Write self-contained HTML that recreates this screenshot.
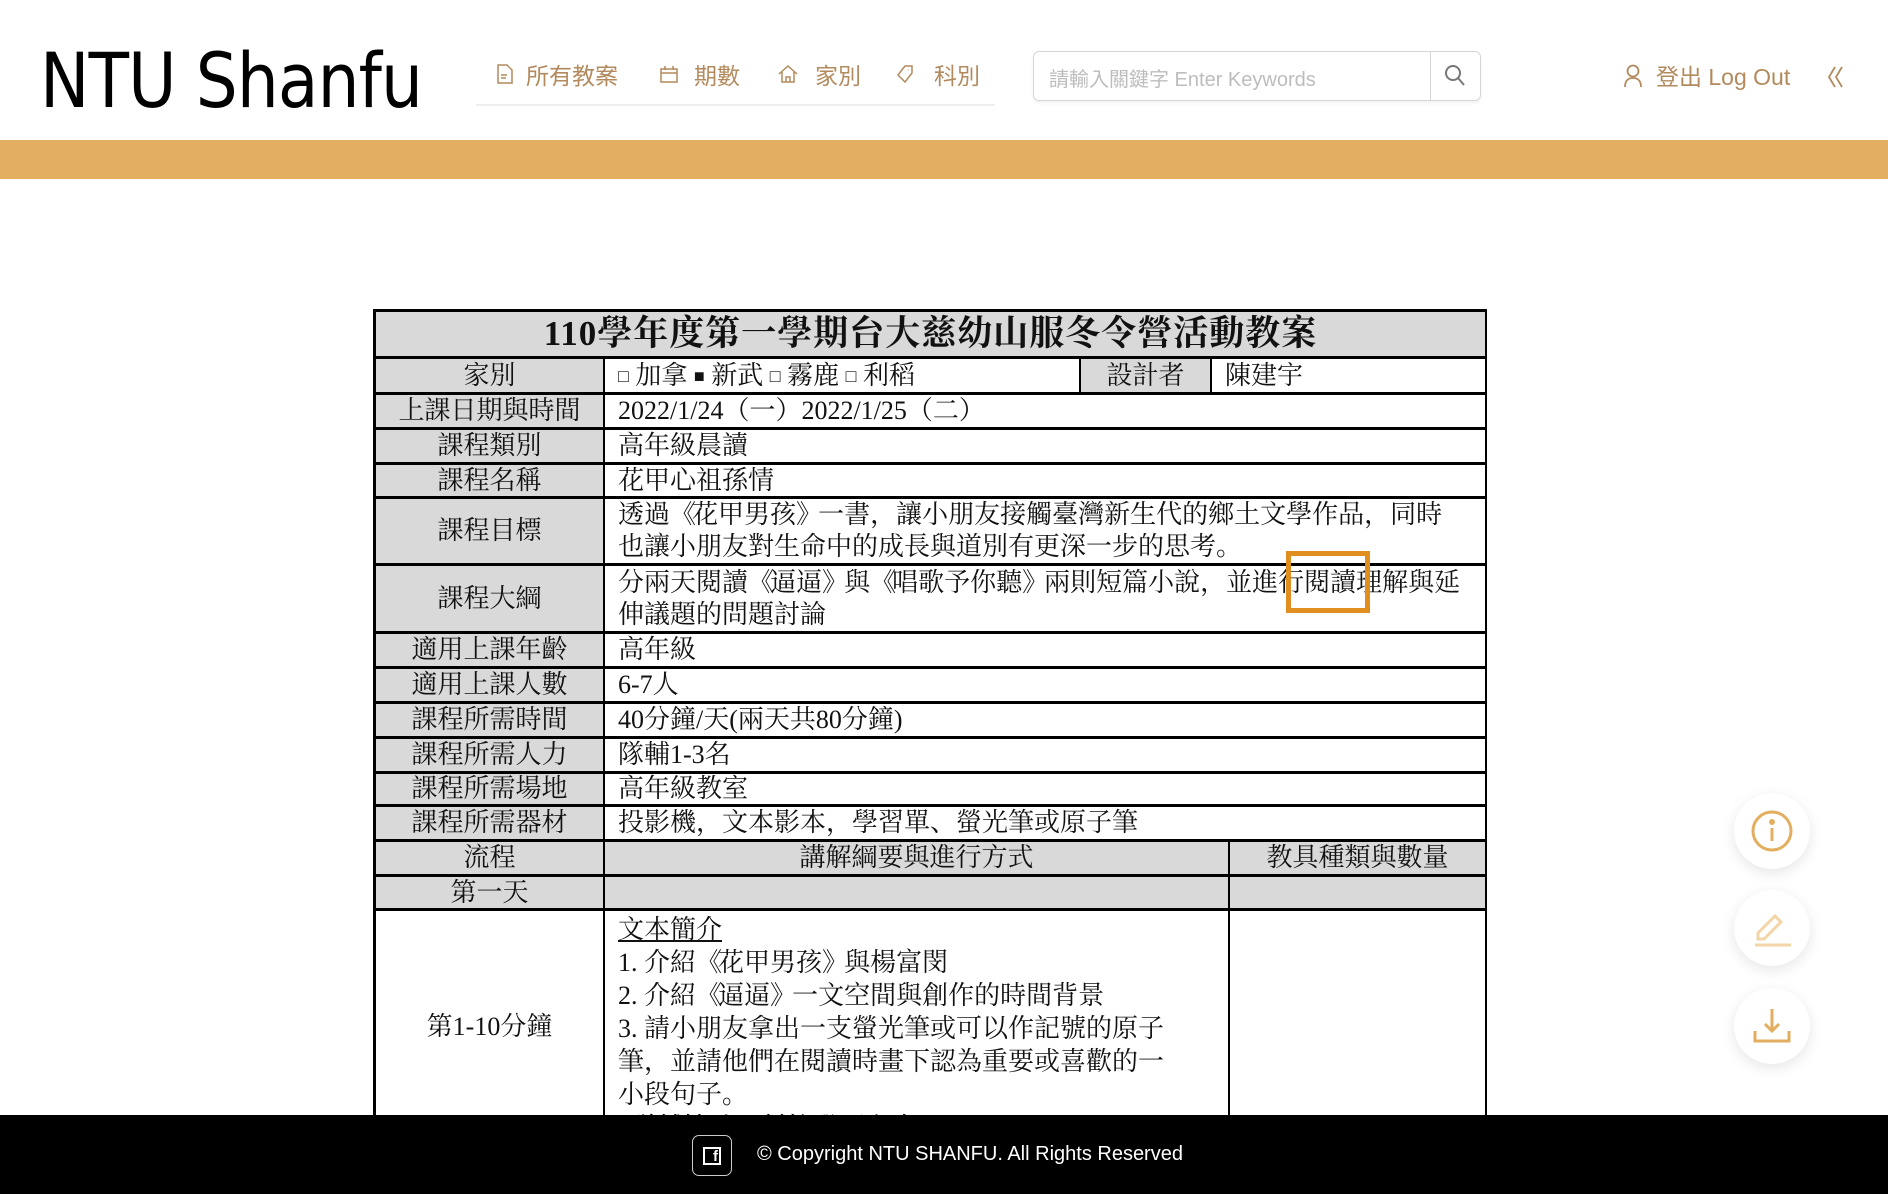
<!DOCTYPE html>
<html><head><meta charset="utf-8"><style>
*{margin:0;padding:0;box-sizing:border-box}
html,body{width:1888px;height:1194px;overflow:hidden}
body{position:relative;background:#fff;font-family:"Liberation Sans","Noto Sans CJK TC",sans-serif}
.logo{position:absolute;left:40px;top:36px;font-size:76px;color:#000;letter-spacing:-1px;font-family:"DejaVu Sans","Liberation Sans",sans-serif;font-weight:400;transform:scaleX(0.87);transform-origin:left}
.nav{position:absolute;top:57px;font-size:23px;color:#b38a5d;display:flex;align-items:center;gap:8px}
.navline{position:absolute;left:476px;top:104px;width:519px;height:2px;background:#eee}
.search{position:absolute;left:1033px;top:51px;width:448px;height:50px;border:1px solid #d6d6d6;border-radius:6px;box-shadow:0 2px 3px rgba(0,0,0,.06)}
.search span{position:absolute;left:15px;top:11px;font-size:20px;color:#bdbdbd}
.search .btn{position:absolute;left:396px;top:0;width:1px;height:48px;background:#d6d6d6}
.band{position:absolute;left:0;top:140px;width:1888px;height:39px;background:#e3ae5f}
.tblwrap{position:absolute;left:373px;top:309px;width:1120px;height:806px;overflow:hidden}
.tbl{position:absolute;left:0;top:0;width:1114px;height:806px;border-left:3px solid #000;border-top:3px solid #000;font-family:"Liberation Serif","Noto Serif CJK SC",serif;font-size:26px;color:#111}
.c{position:absolute;border-right:2px solid #000;border-bottom:3px solid #000;display:flex;align-items:center;padding-left:13px;line-height:32px;overflow:hidden;white-space:nowrap}
.g{background:#d9d9d9;justify-content:center;padding-left:0}
.n{letter-spacing:-4px}
.footer{position:absolute;left:0;top:1115px;width:1888px;height:79px;background:#000;color:#fff}
.fab{position:absolute;left:1734px;width:76px;height:76px;border-radius:50%;background:#fff;box-shadow:0 4px 14px rgba(0,0,0,.1);display:flex;align-items:center;justify-content:center}
</style></head><body>
<div class="logo">NTU Shanfu</div>
<div class="nav" style="left:497px"><svg width="16" height="20" viewBox="0 0 16 20" fill="none" stroke="#b38a5d" stroke-width="1.5"><path d="M1 1h9l5 5v13H1z M4 11h6 M4 14h5"/></svg><span style="margin-left:5px">所有教案</span></div>
<div class="nav" style="left:660px"><svg width="18" height="18" viewBox="0 0 18 18" fill="none" stroke="#b38a5d" stroke-width="1.5"><path d="M1 4h16v13H1z M1 8h16 M5 1v4 M13 1v4"/></svg><span style="margin-left:8px">期數</span></div>
<div class="nav" style="left:778px"><svg width="20" height="18" viewBox="0 0 20 18" fill="none" stroke="#b38a5d" stroke-width="1.5"><path d="M1 9l9-8 9 8 M4 7v10h12V7 M8 17v-5h4v5"/></svg><span style="margin-left:9px">家別</span></div>
<div class="nav" style="left:896px"><svg width="18" height="20" viewBox="0 0 18 20" fill="none" stroke="#b38a5d" stroke-width="1.5"><path d="M9 2h7v7l-7 9-7-7z M12 6h.5"/></svg><span style="margin-left:12px">科別</span></div>
<div class="navline"></div>
<div class="search"><span>請輸入關鍵字 Enter Keywords</span><div class="btn"></div>
<svg style="position:absolute;left:410px;top:12px" width="22" height="24" viewBox="0 0 22 24" fill="none" stroke="#777" stroke-width="2"><circle cx="9" cy="9" r="7"/><path d="M14 14l6 7"/></svg></div>
<svg style="position:absolute;left:1623px;top:64px" width="20" height="24" viewBox="0 0 20 24" fill="none" stroke="#b38a5d" stroke-width="1.8"><circle cx="10" cy="7" r="5.5"/><path d="M2 23c0-6 3-9 8-9s8 3 8 9"/></svg>
<div style="position:absolute;left:1656px;top:58px;font-size:23px;color:#b38a5d">登出 Log Out</div>
<svg style="position:absolute;left:1827px;top:66px" width="18" height="22" viewBox="0 0 18 22" fill="none" stroke="#b38a5d" stroke-width="1.8"><path d="M8 1L2 11l6 10 M15 1L9 11l6 10"/></svg>
<div class="band"></div>

<div class="tblwrap"><div class="tbl">
<div class="c g" style="left:0;top:0;width:1111px;height:47px;font-size:35px;font-weight:bold;letter-spacing:1px">110學年度第一學期台大慈幼山服冬令營活動教案</div>
<div class="c g" style="left:0;top:47px;width:229px;height:36px">家別</div>
<div class="c" style="left:229px;top:47px;width:476px;height:36px"><span style="font-size:18px">□</span>&nbsp;加拿&nbsp;<span style="font-size:18px">■</span>&nbsp;新武&nbsp;<span style="font-size:18px">□</span>&nbsp;霧鹿&nbsp;<span style="font-size:18px">□</span>&nbsp;利稻</div>
<div class="c g" style="left:705px;top:47px;width:131px;height:36px">設計者</div>
<div class="c" style="left:836px;top:47px;width:275px;height:36px">陳建宇</div>
<div class="c g" style="left:0;top:83px;width:229px;height:35px">上課日期與時間</div>
<div class="c" style="left:229px;top:83px;width:882px;height:35px">2022/1/24（一）2022/1/25（二）</div>
<div class="c g" style="left:0;top:118px;width:229px;height:35px">課程類別</div>
<div class="c" style="left:229px;top:118px;width:882px;height:35px">高年級晨讀</div>
<div class="c g" style="left:0;top:153px;width:229px;height:34px">課程名稱</div>
<div class="c" style="left:229px;top:153px;width:882px;height:34px">花甲心祖孫情</div>
<div class="c g" style="left:0;top:187px;width:229px;height:67px">課程目標</div>
<div class="c" style="left:229px;top:187px;width:882px;height:67px"><div>透過<span class="n">《</span>花甲男孩<span class="n">》</span>一書，讓小朋友接觸臺灣新生代的鄉土文學作品，同時<br>也讓小朋友對生命中的成長與道別有更深一步的思考。</div></div>
<div class="c g" style="left:0;top:254px;width:229px;height:68px">課程大綱</div>
<div class="c" style="left:229px;top:254px;width:882px;height:68px"><div>分兩天閱讀<span class="n">《</span>逼逼<span class="n">》</span>與<span class="n">《</span>唱歌予你聽<span class="n">》</span>兩則短篇小說，並進行閱讀理解與延<br>伸議題的問題討論</div></div>
<div class="c g" style="left:0;top:322px;width:229px;height:35px">適用上課年齡</div>
<div class="c" style="left:229px;top:322px;width:882px;height:35px">高年級</div>
<div class="c g" style="left:0;top:357px;width:229px;height:35px">適用上課人數</div>
<div class="c" style="left:229px;top:357px;width:882px;height:35px">6-7人</div>
<div class="c g" style="left:0;top:392px;width:229px;height:35px">課程所需時間</div>
<div class="c" style="left:229px;top:392px;width:882px;height:35px">40分鐘/天(兩天共80分鐘)</div>
<div class="c g" style="left:0;top:427px;width:229px;height:35px">課程所需人力</div>
<div class="c" style="left:229px;top:427px;width:882px;height:35px">隊輔1-3名</div>
<div class="c g" style="left:0;top:462px;width:229px;height:33px">課程所需場地</div>
<div class="c" style="left:229px;top:462px;width:882px;height:33px">高年級教室</div>
<div class="c g" style="left:0;top:495px;width:229px;height:35px">課程所需器材</div>
<div class="c" style="left:229px;top:495px;width:882px;height:35px">投影機，文本影本，學習單、螢光筆或原子筆</div>
<div class="c g" style="left:0;top:530px;width:229px;height:35px">流程</div>
<div class="c g" style="left:229px;top:530px;width:625px;height:35px">講解綱要與進行方式</div>
<div class="c g" style="left:854px;top:530px;width:257px;height:35px">教具種類與數量</div>
<div class="c g" style="left:0;top:565px;width:229px;height:34px">第一天</div>
<div class="c g" style="left:229px;top:565px;width:625px;height:34px"></div>
<div class="c g" style="left:854px;top:565px;width:257px;height:34px"></div>
<div class="c" style="left:0;top:599px;width:229px;height:207px;justify-content:center;padding-left:0;align-items:flex-start;padding-top:100px;border-bottom:0">第1-10分鐘</div>
<div class="c" style="left:229px;top:599px;width:625px;height:207px;align-items:flex-start;padding-top:2px;line-height:33px;border-bottom:0"><div><u>文本簡介</u><br>1. 介紹<span class="n">《</span>花甲男孩<span class="n">》</span>與楊富閔<br>2. 介紹<span class="n">《</span>逼逼<span class="n">》</span>一文空間與創作的時間背景<br>3. 請小朋友拿出一支螢光筆或可以作記號的原子<br>筆，並請他們在閱讀時畫下認為重要或喜歡的一<br>小段句子。<br>*隊輔協助，幫忙發下文本</div></div>
<div class="c" style="left:854px;top:599px;width:257px;height:207px;border-bottom:0"></div>
</div></div>
<div style="position:absolute;left:1286px;top:551px;width:84px;height:62px;border:5px solid #e08e1f"></div>

<div class="fab" style="top:793px"><svg width="42" height="42" viewBox="0 0 42 42" fill="none" stroke="#e3ae5f" stroke-width="3"><circle cx="21" cy="21" r="19"/><path d="M21 18v13"/><circle cx="21" cy="12" r="1.5" fill="#e3ae5f"/></svg></div>
<div class="fab" style="top:890px"><svg width="40" height="40" viewBox="0 0 40 40" fill="none" stroke="#f3d5a8" stroke-width="3"><path d="M6 25L23 8l6 6-17 17H6z M3 37h36"/></svg></div>
<div class="fab" style="top:988px"><svg width="40" height="40" viewBox="0 0 40 40" fill="none" stroke="#e3ae5f" stroke-width="3"><path d="M20 3v22 M13 18l7 7 7-7" /><path d="M3 25v10h34V25"/></svg></div>

<div class="footer">
<div style="position:absolute;left:692px;top:20px;width:40px;height:41px;border:1px solid #ccc;border-radius:7px"><div style="position:absolute;left:10px;top:11px;width:18px;height:18px;border:2px solid #fff;font-size:15px;font-weight:bold;line-height:16px;text-align:right;padding-right:1px">f</div></div>
<div style="position:absolute;left:757px;top:28px;font-size:20px">© Copyright NTU SHANFU. All Rights Reserved</div>
</div>
</body></html>
